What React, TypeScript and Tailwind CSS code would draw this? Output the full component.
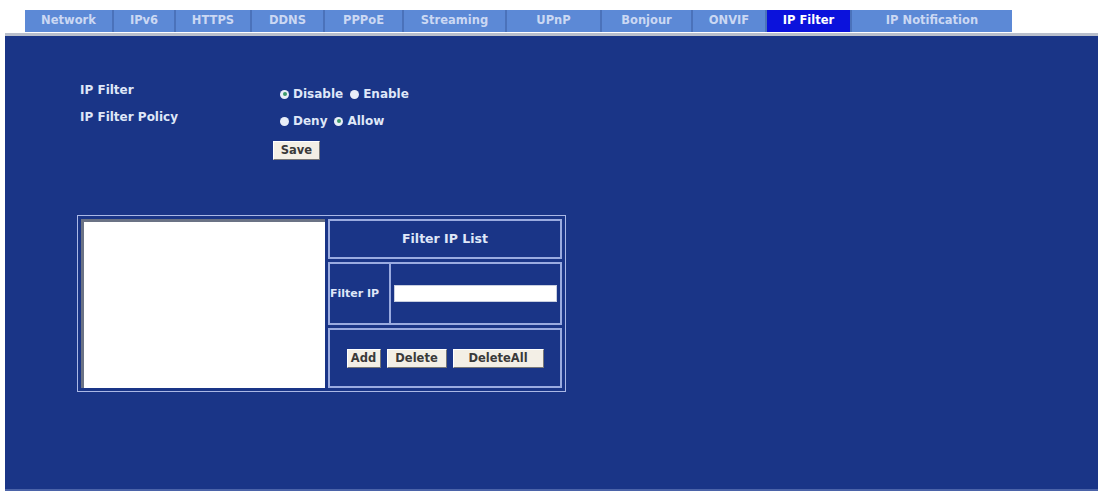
const tabs = [
  { label: "Network", w: "w-[87px]" },
  { label: "IPv6", w: "w-[60px]" },
  { label: "HTTPS", w: "w-[74px]" },
  { label: "DDNS", w: "w-[71px]" },
  { label: "PPPoE", w: "w-[77px]" },
  { label: "Streaming", w: "w-[101px]" },
  { label: "UPnP", w: "w-[93px]" },
  { label: "Bonjour", w: "w-[89px]" },
  { label: "ONVIF", w: "w-[72px]" },
  { label: "IP Filter", w: "w-[83px]", active: true },
  { label: "IP Notification", w: "w-[160px]" },
];

function Radio({ checked, label }: { checked?: boolean; label: string }) {
  return (
    <label className="flex items-center gap-[4px]">
      <span className="w-[9px] h-[9px] rounded-full bg-[#e8eef8] flex items-center justify-center">
        {checked && <span className="w-[4px] h-[4px] rounded-full bg-[#3c9a6a]" />}
      </span>
      <span>{label}</span>
    </label>
  );
}

function Btn({ label, w }: { label: string; w: string }) {
  return (
    <button
      className={`${w} h-[19px] bg-[#f3efe6] text-[#3a3a3a] text-[11.5px] font-bold border border-t-[#fff] border-l-[#fff] border-r-[#777] border-b-[#777] leading-none`}
    >
      {label}
    </button>
  );
}

export default function App() {
  return (
    <div
      className="w-[1100px] h-[492px] bg-white pt-[10px] overflow-hidden"
      style={{ fontFamily: '"DejaVu Sans", Verdana, sans-serif' }}
    >
      <div className="flex ml-[25px] h-[22px] gap-[2px] bg-[#4b72ba] w-max">
        {tabs.map((t) => (
          <div
            key={t.label}
            className={`${t.w} h-full flex items-center justify-center text-[11.5px] font-bold ${
              t.active ? "bg-[#0b12dc] text-white" : "bg-[#5c89d6] text-[#cbd8f3]"
            }`}
          >
            {t.label}
          </div>
        ))}
      </div>

      <div className="ml-[5px] w-[1093px] h-[458px] mt-[1px] border-t-[3px] border-[#b9bfcc] bg-[#1a3587] border-b-2 border-b-[#4b63a8] text-[#dfe7f8] text-[12px] font-bold">
        <div className="pl-[75px] pt-[49px]">
          <div className="grid grid-cols-[200px_auto] items-center gap-y-[9px] w-max">
            <div className="-mt-[8px]">IP Filter</div>
            <div className="flex gap-[7px]">
              <Radio checked label="Disable" />
              <Radio label="Enable" />
            </div>
            <div className="-mt-[8px]">IP Filter Policy</div>
            <div className="flex gap-[7px]">
              <Radio label="Deny" />
              <Radio checked label="Allow" />
            </div>
          </div>
          <div className="ml-[193px] mt-[11px]">
            <Btn label="Save" w="w-[47px]" />
          </div>
        </div>

        <div className="ml-[72px] mt-[55px] w-[489px] h-[177px] border border-[#aab8e6] p-[3px] flex gap-[3px]">
          <div className="w-[244px] h-full bg-white border-t-[3px] border-l-[3px] border-t-[#6b7385] border-l-[#6b7385]" />
          <div className="flex-1 flex flex-col gap-[3px]">
            <div className="h-[40px] border-2 border-[#9aabe0] flex items-center justify-center text-[12.5px]">Filter IP List</div>
            <div className="h-[63px] border-2 border-[#9aabe0] flex">
              <div className="w-[61px] border-r-2 border-[#9aabe0] flex items-center whitespace-nowrap text-[11px]">Filter IP</div>
              <div className="flex-1 flex items-center px-[3px]">
                <div className="w-full h-[17px] bg-white border border-[#c8cfe0]" />
              </div>
            </div>
            <div className="flex-1 border-2 border-[#9aabe0] flex items-center justify-center gap-[6px]">
              <Btn label="Add" w="w-[34px]" />
              <Btn label="Delete" w="w-[60px]" />
              <Btn label="DeleteAll" w="w-[91px]" />
            </div>
          </div>
        </div>
      </div>
    </div>
  );
}
